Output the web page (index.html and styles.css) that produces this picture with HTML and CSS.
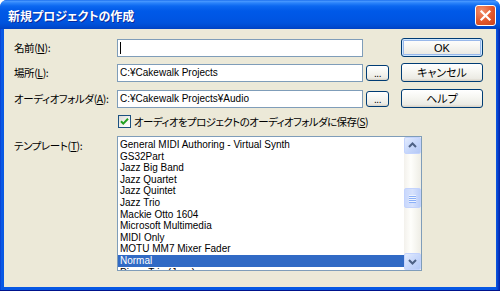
FILE: index.html
```html
<!DOCTYPE html>
<html lang="ja">
<head>
<meta charset="utf-8">
<title>新規プロジェクトの作成</title>
<link rel="stylesheet" href="styles.css">
</head>
<body>
<div class="window">
  <div class="titlebar">
    <span class="title">新規プロジェクトの作成</span>
    <div class="close">
      <svg width="19" height="19" viewBox="0 0 19 19"><path d="M5.5 5.5 L13.5 13.5 M13.5 5.5 L5.5 13.5" stroke="#fff" stroke-width="2.2" stroke-linecap="square"/></svg>
    </div>
  </div>
  <div class="frame">
    <div class="client">
      <div class="form">
        <div class="lbl">名前(<u>N</u>):</div>
        <div class="input"><span class="caret"></span></div>
        <div class="slot"></div>
        <div class="gap"></div>
        <button class="btn push default">OK</button>

        <div class="lbl">場所(<u>L</u>):</div>
        <div class="input">C:¥Cakewalk Projects</div>
        <button class="btn dots">...</button>
        <div class="gap"></div>
        <button class="btn push">キャンセル</button>

        <div class="lbl">オーディオフォルダ(<u>A</u>):</div>
        <div class="input">C:¥Cakewalk Projects¥Audio</div>
        <button class="btn dots">...</button>
        <div class="gap"></div>
        <button class="btn push">ヘルプ</button>

        <div class="lbl"></div>
        <div class="checkrow">
          <span class="check"><svg width="11" height="11" viewBox="0 0 11 11"><path d="M2 5.2 L4.3 7.6 L9 2.8" fill="none" stroke="#21A121" stroke-width="2"/></svg></span>
          <span class="checktext">オーディオをプロジェクトのオーディオフォルダに保存(<u>S</u>)</span>
        </div>

        <div class="lbl">テンプレート(<u>T</u>):</div>
        <div class="list">
          <div class="items">
            <div class="item">General MIDI Authoring - Virtual Synth</div>
            <div class="item">GS32Part</div>
            <div class="item">Jazz Big Band</div>
            <div class="item">Jazz Quartet</div>
            <div class="item">Jazz Quintet</div>
            <div class="item">Jazz Trio</div>
            <div class="item">Mackie Otto 1604</div>
            <div class="item">Microsoft Multimedia</div>
            <div class="item">MIDI Only</div>
            <div class="item">MOTU MM7 Mixer Fader</div>
            <div class="item selected">Normal</div>
            <div class="item">Piano Trio (Jazz)</div>
          </div>
          <div class="sb">
            <div class="sbbtn"><svg width="15" height="15" viewBox="0 0 15 15"><path d="M4 9 L7.5 5.5 L11 9" fill="none" stroke="#4D6185" stroke-width="2"/></svg></div>
            <div class="track"><div class="thumb"><span></span><span></span><span></span><span></span></div></div>
            <div class="sbbtn"><svg width="15" height="15" viewBox="0 0 15 15"><path d="M4 6 L7.5 9.5 L11 6" fill="none" stroke="#4D6185" stroke-width="2"/></svg></div>
          </div>
        </div>
      </div>
    </div>
  </div>
</div>
</body>
</html>
```

FILE: styles.css
```css
* { box-sizing: border-box; }
html, body { margin: 0; padding: 0; }
body {
  width: 500px;
  height: 291px;
  overflow: hidden;
  background: #ffffff;
  font-family: "Liberation Sans", "Noto Sans CJK JP", sans-serif;
  font-size: 10px;
  color: #000;
}
.window {
  width: 500px;
  height: 291px;
  display: flex;
  flex-direction: column;
  border-radius: 7px 7px 0 0;
  overflow: hidden;
  background: #0850DC;
}
.titlebar {
  height: 29px;
  flex: none;
  display: flex;
  align-items: center;
  justify-content: space-between;
  padding: 0 4px 0 8px;
  background: linear-gradient(to bottom, #0A5FE8 0px, #4C9BFF 1px, #2A83FA 3px, #0C68F0 6px, #0059E8 11px, #0056E4 18px, #0053DD 23px, #0049CE 27px, #0042C2 29px);
}
.title {
  color: #fff;
  font-weight: bold;
  font-size: 12px;
  font-family: "Noto Sans CJK JP", sans-serif;
  font-feature-settings: "palt";
  text-shadow: 1px 1px 0 #0A2A9A;
  margin-top: 1px;
}
.close {
  width: 21px;
  height: 21px;
  border: 1px solid #fff;
  border-radius: 3px;
  background: radial-gradient(circle at 30% 25%, #F2906D 0%, #E2572C 55%, #C8421C 100%);
  display: flex;
  align-items: center;
  justify-content: center;
  margin-top: 1px;
}
.close svg { display: block; }
.frame {
  flex: 1;
  display: flex;
  padding: 0 4px 4px 4px;
  background: linear-gradient(to right, #0832C8 0px, #0A5AE6 1px, #0758E4 3px, #0758E4 496px, #0A4ED8 497px, #0020A8 500px);
  box-shadow: inset 0 -1px 0 #00138C;
}
.client {
  flex: 1;
  background: #ECE9D8;
  padding: 9px 0 0 10px;
}
.form {
  display: grid;
  grid-template-columns: 103px 249px 23px 12px 82px;
  grid-template-rows: 25px 26px 26px 21px 135px;
}
.lbl {
  font-size: 10.5px;
  font-family: "Noto Sans CJK JP", "Liberation Sans", sans-serif;
  font-feature-settings: "palt";
  line-height: 18px;
  height: 18px;
  margin-top: 1px;
  white-space: nowrap;
  letter-spacing: -0.4px;
}
.lbl u { text-decoration: underline; text-underline-offset: 1px; }
.input {
  width: 246px;
  height: 18px;
  margin-top: 1px;
  border: 1px solid #7F9DB9;
  background: #fff;
  padding: 0 2px;
  line-height: 16px;
  white-space: nowrap;
  overflow: hidden;
  display: flex;
  align-items: center;
}
.caret {
  display: block;
  width: 1px;
  height: 12px;
  background: #000;
}
.btn {
  font: inherit;
  color: #000;
  padding: 0;
  border: 1px solid #003C74;
  border-radius: 3px;
  background: linear-gradient(to bottom, #FFFFFF 0%, #F7F7F3 40%, #ECEBE4 85%, #D6D0C5 100%);
}
.push {
  width: 82px;
  height: 19px;
  font-size: 11px;
  font-family: "Liberation Sans", "Noto Sans CJK JP", sans-serif;
  font-feature-settings: "palt";
  line-height: 16px;
  align-self: start;
}
.default {
  box-shadow: inset 0 0 0 1px #CEE7FF, inset 0 0 0 2px #98B8EA;
}
.dots {
  width: 23px;
  height: 16px;
  margin-top: 2px;
  font-size: 10px;
  line-height: 10px;
  padding-top: 2px;
  align-self: start;
  letter-spacing: -0.5px;
}
.checkrow {
  grid-column: 2 / 6;
  display: flex;
  align-items: center;
  gap: 3px;
  padding-left: 1px;
  height: 13px;
}
.check {
  width: 13px;
  height: 13px;
  border: 1px solid #1C5180;
  background: linear-gradient(135deg, #DCDCD7 0%, #F4F4F0 60%, #FFFFFF 100%);
  display: flex;
  align-items: center;
  justify-content: center;
  flex: none;
}
.check svg { display: block; }
.checktext {
  font-size: 10.5px;
  font-family: "Noto Sans CJK JP", "Liberation Sans", sans-serif;
  font-feature-settings: "palt";
  white-space: nowrap;
  letter-spacing: -0.6px;
}
.list {
  grid-column: 2 / 6;
  width: 305px;
  height: 135px;
  border: 1px solid #7F9DB9;
  background: #fff;
  display: flex;
}
.items {
  flex: 1;
  overflow: hidden;
  padding-top: 2px;
}
.item {
  height: 11.6px;
  line-height: 11.6px;
  padding-left: 2px;
  white-space: nowrap;
}
.selected {
  background: #316AC5;
  color: #fff;
}
.sb {
  width: 17px;
  display: flex;
  flex-direction: column;
  background: linear-gradient(to right, #F3F1EC 0%, #FEFEFB 40%, #EEEDE5 100%);
}
.sbbtn {
  width: 17px;
  height: 17px;
  flex: none;
  border: 1px solid #C3D3FD;
  border-radius: 2px;
  background: linear-gradient(135deg, #E2EBFE 0%, #C8D8FB 50%, #B4C8F6 100%);
  display: flex;
  align-items: center;
  justify-content: center;
}
.sbbtn svg { display: block; }
.track {
  flex: 1;
  padding-top: 34px;
}
.thumb {
  width: 17px;
  height: 20px;
  border: 1px solid #C3D3FD;
  border-radius: 2px;
  background: linear-gradient(to right, #C9D8FC 0%, #D7E2FD 50%, #BDCFF9 100%);
  display: flex;
  flex-direction: column;
  align-items: center;
  justify-content: center;
  gap: 1px;
}
.thumb span {
  display: block;
  width: 7px;
  height: 1px;
  background: #EEF4FE;
  box-shadow: 0 1px 0 #8CB0F8;
}
```
